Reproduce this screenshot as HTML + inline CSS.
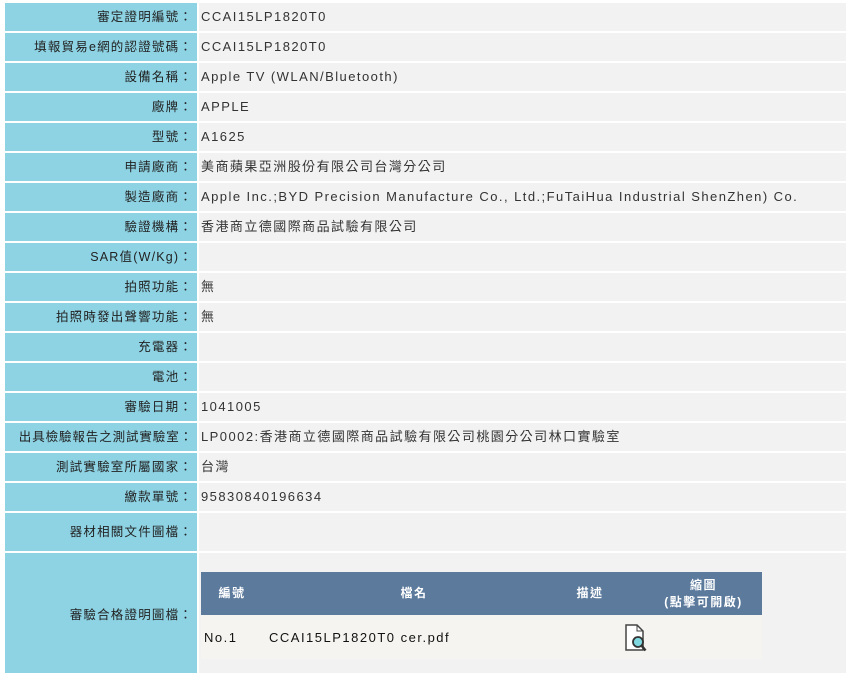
<!DOCTYPE html>
<html><head><meta charset="utf-8"><style>
body{margin:0;background:#fff;font-family:"Liberation Sans","Noto Sans CJK TC",sans-serif;font-size:12.5px;color:#333;letter-spacing:1.4px;}
.l,.r{position:absolute;white-space:nowrap;height:28px;line-height:28px;overflow:hidden}
.l{left:5px;width:188px;padding-right:4px;text-align:right;background:#8dd3e4;color:#222;letter-spacing:1.2px}
.r{left:199px;width:645px;padding-left:2px;background:#f2f2f2;font-size:13px;letter-spacing:1.45px}
.inner{position:absolute;left:201px;top:572px;border-collapse:collapse;width:561px;letter-spacing:1.5px;table-layout:fixed}
.inner th{background:#5b7a9c;color:#fff;font-size:12px;font-weight:bold;height:43px;padding:0;line-height:17px}
.inner td{background:#f5f4f0;height:40px;color:#111;padding:0;font-size:13px}
</style></head><body>
<div class="l" style="top:3px">審定證明編號：</div><div class="r" style="top:3px">CCAI15LP1820T0</div>
<div class="l" style="top:33px">填報貿易e網的認證號碼：</div><div class="r" style="top:33px">CCAI15LP1820T0</div>
<div class="l" style="top:63px">設備名稱：</div><div class="r" style="top:63px">Apple TV (WLAN/Bluetooth)</div>
<div class="l" style="top:93px">廠牌：</div><div class="r" style="top:93px">APPLE</div>
<div class="l" style="top:123px">型號：</div><div class="r" style="top:123px">A1625</div>
<div class="l" style="top:153px">申請廠商：</div><div class="r" style="top:153px">美商蘋果亞洲股份有限公司台灣分公司</div>
<div class="l" style="top:183px">製造廠商：</div><div class="r" style="top:183px">Apple Inc.;BYD Precision Manufacture Co., Ltd.;FuTaiHua Industrial ShenZhen) Co.</div>
<div class="l" style="top:213px">驗證機構：</div><div class="r" style="top:213px">香港商立德國際商品試驗有限公司</div>
<div class="l" style="top:243px">SAR值(W/Kg)：</div><div class="r" style="top:243px"></div>
<div class="l" style="top:273px">拍照功能：</div><div class="r" style="top:273px">無</div>
<div class="l" style="top:303px">拍照時發出聲響功能：</div><div class="r" style="top:303px">無</div>
<div class="l" style="top:333px">充電器：</div><div class="r" style="top:333px"></div>
<div class="l" style="top:363px">電池：</div><div class="r" style="top:363px"></div>
<div class="l" style="top:393px">審驗日期：</div><div class="r" style="top:393px">1041005</div>
<div class="l" style="top:423px;letter-spacing:0.9px">出具檢驗報告之測試實驗室：</div><div class="r" style="top:423px">LP0002:香港商立德國際商品試驗有限公司桃園分公司林口實驗室</div>
<div class="l" style="top:453px">測試實驗室所屬國家：</div><div class="r" style="top:453px">台灣</div>
<div class="l" style="top:483px">繳款單號：</div><div class="r" style="top:483px">95830840196634</div>
<div class="l" style="top:513px;height:38px;line-height:38px">器材相關文件圖檔：</div><div class="r" style="top:513px;height:38px"></div>
<div class="l" style="top:553px;height:120px;line-height:124px">審驗合格證明圖檔：</div><div class="r" style="top:553px;height:120px"></div>
<table class="inner"><colgroup><col style="width:62px"><col style="width:302px"><col style="width:50px"><col></colgroup>
<tr><th>編號</th><th>檔名</th><th>描述</th><th style="padding-left:30px">縮圖<br>(點擊可開啟)</th></tr>
<tr><td style="padding-left:3px">No.1</td><td style="padding-left:6px">CCAI15LP1820T0 cer.pdf</td><td></td><td style="padding-left:8px;padding-top:4px"><svg width="26" height="30" viewBox="0 0 26 30"><path d="M3 2h11l6 6v19H3z" fill="#fff" stroke="#444" stroke-width="1.5"/><path d="M14 2v6h6" fill="none" stroke="#444"/><circle cx="15" cy="19" r="5" fill="#7fd8e0" stroke="#333" stroke-width="1.8"/><path d="M18.5 22.5l4 5" stroke="#333" stroke-width="2.5"/></svg></td></tr></table>
</body></html>
